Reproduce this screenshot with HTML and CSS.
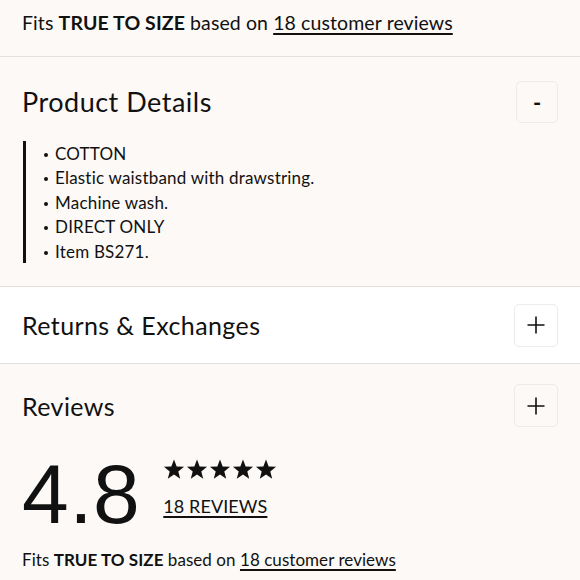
FILE: index.html
```html
<!DOCTYPE html>
<html>
<head>
<meta charset="utf-8">
<link rel="stylesheet" href="styles.css">
</head>
<body>
<div class="page">
  <section class="fit fit-top">
    <p class="fit-text">Fits <b>TRUE TO SIZE</b> based on <a href="#">18 customer reviews</a></p>
  </section>

  <section class="acc acc-details">
    <div class="acc-head">
      <h2 class="acc-title">Product Details</h2>
      <button class="toggle minus" type="button">-</button>
    </div>
    <ul class="details">
      <li>COTTON</li>
      <li>Elastic waistband with drawstring.</li>
      <li>Machine wash.</li>
      <li>DIRECT ONLY</li>
      <li>Item BS271.</li>
    </ul>
  </section>

  <section class="acc acc-white">
    <div class="acc-head">
      <h2 class="acc-title">Returns &amp; Exchanges</h2>
      <button class="toggle" type="button"><svg width="18" height="18" viewBox="0 0 18 18"><path d="M9 0.5V17.5M0.5 9H17.5" stroke="#111" stroke-width="1.6" fill="none"/></svg></button>
    </div>
  </section>

  <section class="acc acc-reviews">
    <div class="acc-head">
      <h2 class="acc-title">Reviews</h2>
      <button class="toggle" type="button"><svg width="18" height="18" viewBox="0 0 18 18"><path d="M9 0.5V17.5M0.5 9H17.5" stroke="#111" stroke-width="1.6" fill="none"/></svg></button>
    </div>
    <div class="rating">
      <div class="score">4.8</div>
      <div class="rating-side">
        <div class="stars">
          <svg width="22" height="21" viewBox="0 0 24 23"><path d="M12 0.5l2.9 7.6 8.1 0.4-6.3 5.1 2.1 7.9L12 17l-6.8 4.5 2.1-7.9L1 8.5l8.1-0.4z" fill="#111"/></svg>
          <svg width="22" height="21" viewBox="0 0 24 23"><path d="M12 0.5l2.9 7.6 8.1 0.4-6.3 5.1 2.1 7.9L12 17l-6.8 4.5 2.1-7.9L1 8.5l8.1-0.4z" fill="#111"/></svg>
          <svg width="22" height="21" viewBox="0 0 24 23"><path d="M12 0.5l2.9 7.6 8.1 0.4-6.3 5.1 2.1 7.9L12 17l-6.8 4.5 2.1-7.9L1 8.5l8.1-0.4z" fill="#111"/></svg>
          <svg width="22" height="21" viewBox="0 0 24 23"><path d="M12 0.5l2.9 7.6 8.1 0.4-6.3 5.1 2.1 7.9L12 17l-6.8 4.5 2.1-7.9L1 8.5l8.1-0.4z" fill="#111"/></svg>
          <svg width="22" height="21" viewBox="0 0 24 23"><path d="M12 0.5l2.9 7.6 8.1 0.4-6.3 5.1 2.1 7.9L12 17l-6.8 4.5 2.1-7.9L1 8.5l8.1-0.4z" fill="#111"/></svg>
        </div>
        <a class="count" href="#">18 REVIEWS</a>
      </div>
    </div>
    <p class="fit-text fit-bottom">Fits <b>TRUE TO SIZE</b> based on <a href="#">18 customer reviews</a></p>
  </section>
</div>
</body>
</html>
```

FILE: styles.css
```css
html, body {
  margin: 0;
  padding: 0;
  background: #fcf9f6;
}
body {
  font-family: "Lato", "Open Sans", sans-serif;
  color: #111;
}
.page {
  width: 580px;
}
.fit-top {
  padding: 9px 22px 0;
  height: 47px;
  border-bottom: 1.5px solid #e4e0dd;
}
.fit-text {
  margin: 0;
  font-size: 19.5px;
  line-height: 28px;
  letter-spacing: 0.1px;
  color: #111;
}
.fit-text b {
  font-weight: 700;
}
.fit-text a, .count {
  color: #111;
  text-decoration: underline;
  text-decoration-thickness: 1.5px;
  text-underline-offset: 3px;
}
.acc {
  border-bottom: 1.5px solid #e4e0dd;
  padding: 0 22px;
}
.acc-white {
  background: #fff;
}
.acc-head {
  display: flex;
  align-items: center;
  justify-content: space-between;
  height: 90px;
}
.acc-title {
  margin: 0;
  font-weight: 400;
  font-size: 27px;
  line-height: 1.2;
  letter-spacing: 0.5px;
}
.acc-white .acc-head {
  height: 76px;
}
.acc-white .acc-title, .acc-reviews .acc-title {
  font-size: 25px;
  letter-spacing: 0.4px;
}
.acc-reviews {
  border-bottom: none;
}
.acc-reviews .acc-head {
  height: 83px;
}
.toggle {
  width: 44px;
  height: 43px;
  border: 1.5px solid #efebe8;
  border-radius: 5px;
  background: transparent;
  display: flex;
  align-items: center;
  justify-content: center;
  padding: 0;
  font-family: inherit;
  color: #111;
  margin-right: 0;
}
.minus {
  font-size: 22px;
  font-weight: 700;
  width: 42px;
  height: 42px;
}
.details {
  margin: -6px 0 23px 1px;
  padding: 0 0 0 18px;
  border-left: 3px solid #111;
  list-style: none;
  font-size: 17px;
  line-height: 24.4px;
  letter-spacing: 0.2px;
}
.details li {
  position: relative;
  padding-left: 11px;
  top: 1px;
}
.details li::before {
  content: "";
  position: absolute;
  left: 0;
  top: 11px;
  width: 4px;
  height: 4px;
  border-radius: 50%;
  background: #111;
}
.rating {
  display: flex;
  align-items: flex-start;
  gap: 23px;
  margin-top: 5px;
}
.score {
  font-family: "Liberation Sans", Arial, sans-serif;
  font-size: 84px;
  line-height: 84px;
  letter-spacing: 0.5px;
}
.rating-side {
  display: flex;
  flex-direction: column;
  align-items: flex-start;
  padding-top: 7px;
}
.stars {
  display: flex;
  gap: 1px;
  height: 21px;
}
.stars svg {
  display: block;
}
.count {
  margin-top: 14px;
  font-size: 18px;
  line-height: 24px;
  letter-spacing: 0.1px;
}
.fit-bottom {
  margin-top: 10px;
  font-size: 17px;
  letter-spacing: 0.05px;
}
```
